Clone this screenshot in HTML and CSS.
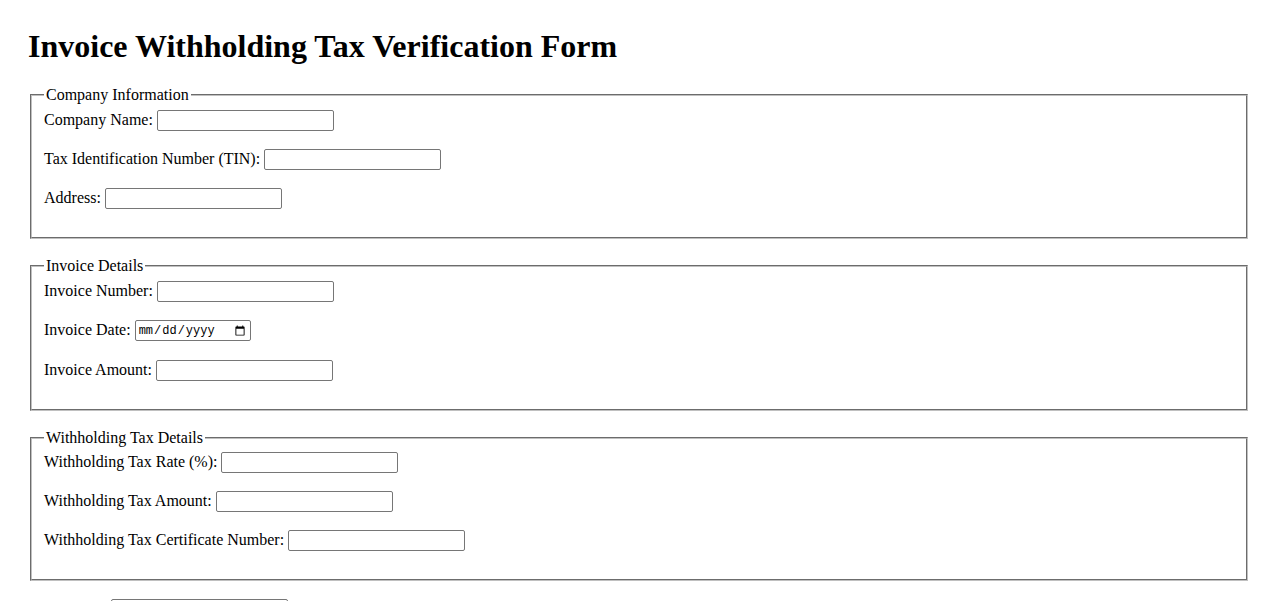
FILE: index.html
```html
<!DOCTYPE html>
<html lang="en">
<head>
<meta charset="utf-8">
<title>Invoice Withholding Tax Verification Form</title>
<link rel="stylesheet" href="styles.css">
</head>
<body>
<h1 class="title">Invoice Withholding Tax Verification Form</h1>
<form class="form">
<fieldset class="group">
<legend class="group-title">Company Information</legend>
<label class="field-label" for="company-name">Company Name:</label>
<input class="field" type="text" id="company-name"><br><br>
<label class="field-label" for="tin">Tax Identification Number (TIN):</label>
<input class="field" type="text" id="tin"><br><br>
<label class="field-label" for="address">Address:</label>
<input class="field" type="text" id="address"><br><br>
</fieldset>
<br>
<fieldset class="group">
<legend class="group-title">Invoice Details</legend>
<label class="field-label" for="invoice-number">Invoice Number:</label>
<input class="field" type="text" id="invoice-number"><br><br>
<label class="field-label" for="invoice-date">Invoice Date:</label>
<input class="field field-date" type="date" id="invoice-date"><br><br>
<label class="field-label" for="invoice-amount">Invoice Amount:</label>
<input class="field" type="text" id="invoice-amount"><br><br>
</fieldset>
<br>
<fieldset class="group">
<legend class="group-title">Withholding Tax Details</legend>
<label class="field-label" for="wht-rate">Withholding Tax Rate (%):</label>
<input class="field" type="text" id="wht-rate"><br><br>
<label class="field-label" for="wht-amount">Withholding Tax Amount:</label>
<input class="field" type="text" id="wht-amount"><br><br>
<label class="field-label" for="wht-cert">Withholding Tax Certificate Number:</label>
<input class="field" type="text" id="wht-cert"><br><br>
</fieldset>
<br>
<label class="field-label" for="verified-by">Verified By:</label>
<input class="field" type="text" id="verified-by"><br><br>
</form>
</body>
</html>
```
FILE: styles.css
```css
html {
  background: #ffffff;
}

body {
  margin: 8px;
  padding: 20px;
  font-family: "Liberation Serif", "Times New Roman", serif;
  font-size: 16px;
  color: #000000;
}

.title {
  margin: 0 0 21.44px;
  font-size: 32px;
  font-weight: bold;
}

.form {
  margin: 0;
}

.group {
  margin: 0 2px;
  padding: 5.6px 12px 10px;
  border: 2px groove rgb(192, 192, 192);
}

.group-title {
  padding: 0 2px;
}

.field-label {
  font-size: 16px;
}

.field {
  box-sizing: border-box;
  width: 177px;
  height: 21px;
  padding: 1px 2px;
  border: 1px solid #767676;
  border-radius: 2px;
  font: 13.333px "Liberation Sans", Arial, sans-serif;
  background: #ffffff;
  vertical-align: baseline;
}

.field-date {
  width: 116px;
  margin-bottom: 1px;
  padding: 2px 2px 0;
  font-family: "Liberation Mono", "Courier New", monospace;
  font-size: 12px;
}
```
